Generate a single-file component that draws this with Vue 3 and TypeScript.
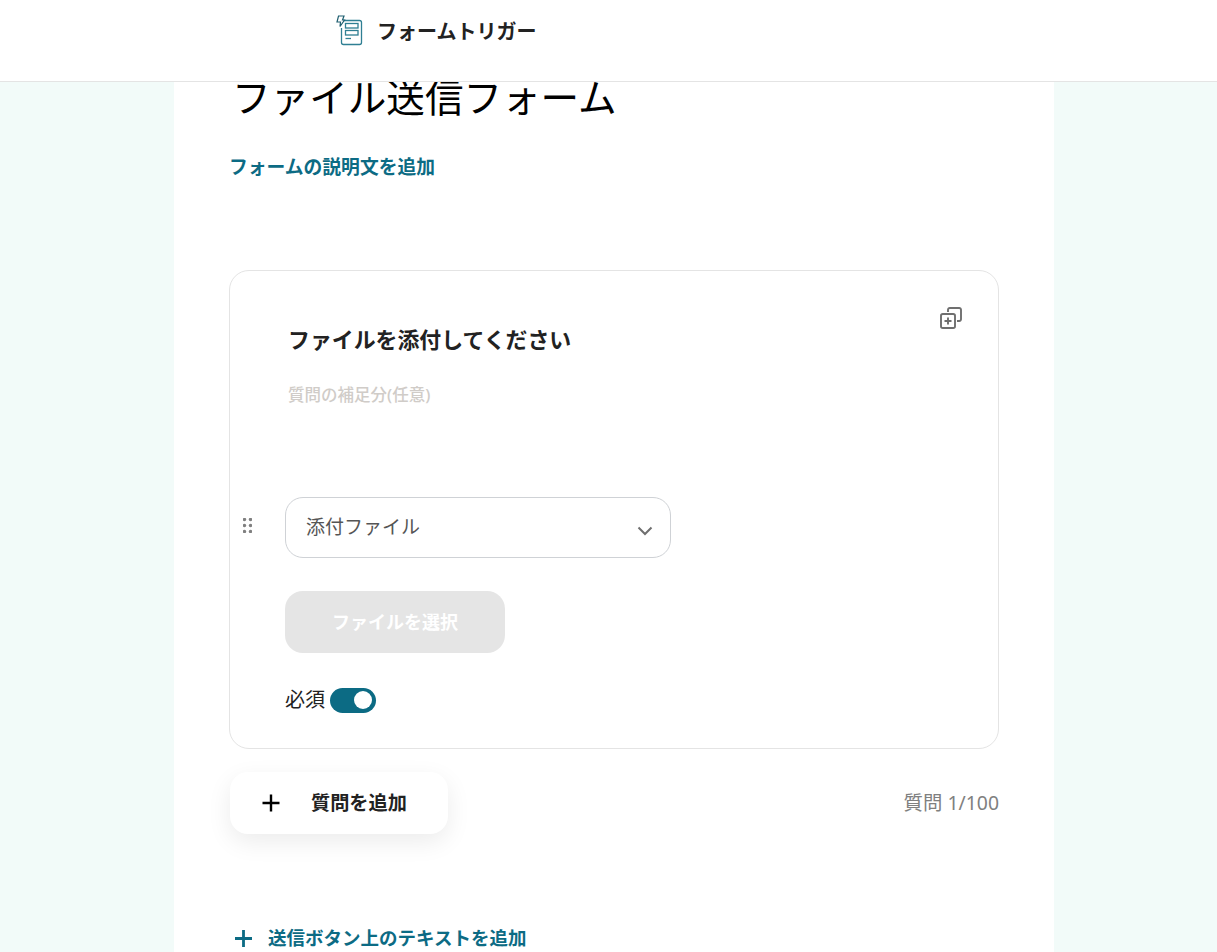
<script setup lang="ts">
import { ref } from 'vue';

const required = ref(true);
const questionCount = ref(1);
const questionMax = 100;
const dragDots = [
  [1.5, 1.5],
  [7.5, 1.5],
  [1.5, 7.5],
  [7.5, 7.5],
  [1.5, 13.5],
  [7.5, 13.5],
];
</script>

<template>
  <div class="page">
    <header class="topbar">
      <div class="brand">
        <svg class="brand-icon" width="27" height="32" viewBox="0 0 27 32" fill="none" stroke="#2f7f93" stroke-width="1.3">
          <path d="M6 5.500h17.500a2 2 0 0 1 2 2v20a2 2 0 0 1-2 2H7.500a2 2 0 0 1-2-2V13" />
          <path d="M2.500 1h5.500L6.500 5h2L4 11.500 4.500 7H1z" stroke="#1f5f70" stroke-width="1.200" fill="#fff" />
          <rect x="9.500" y="8.500" width="12.500" height="4.500" />
          <rect x="9.500" y="15.500" width="12.500" height="4.500" />
          <path d="M9.500 23.500h5.500" />
        </svg>
        <span class="brand-name">フォームトリガー</span>
      </div>
    </header>

    <main class="sheet">
      <h1 class="form-title">ファイル送信フォーム</h1>
      <a class="link desc-link">フォームの説明文を追加</a>

      <section class="card">
        <button class="copy-btn" aria-label="複製">
          <svg width="24" height="24" viewBox="0 0 24 24" fill="none" stroke="#6f6f6f" stroke-width="1.900">
            <path d="M9 6V3.800A1.800 1.800 0 0 1 10.800 2h9.400A1.800 1.800 0 0 1 22 3.800v9.400a1.800 1.800 0 0 1-1.800 1.800H18" />
            <rect x="2" y="8" width="14" height="14" rx="1.800" />
            <path d="M9 11.500v7M5.500 15h7" />
          </svg>
        </button>
        <h2 class="question">ファイルを添付してください</h2>
        <p class="supplement">質問の補足分(任意)</p>

        <div class="field-row">
          <svg class="drag" width="9" height="15" viewBox="0 0 9 15" fill="#808080">
            <circle v-for="(d, i) in dragDots" :key="i" :cx="d[0]" :cy="d[1]" r="1.700" />
          </svg>
          <div class="select">
            <span>添付ファイル</span>
            <svg width="16" height="10" viewBox="0 0 16 10" fill="none" stroke="#6f6f6f" stroke-width="2">
              <path d="M1.500 1.500 8 8l6.500-6.500" />
            </svg>
          </div>
        </div>

        <button class="file-btn" disabled>ファイルを選択</button>

        <label class="required">
          <span>必須</span>
          <span class="switch" :class="{ on: required }" @click="required = !required"><i /></span>
        </label>
      </section>

      <div class="below-card">
        <button class="add-question">
          <svg width="18" height="18" viewBox="0 0 18 18" stroke="#000" stroke-width="2.400">
            <path d="M9 0.500v17M0.500 9h17" />
          </svg>
          <span>質問を追加</span>
        </button>
        <span class="counter">質問 {{ questionCount }}/{{ questionMax }}</span>
      </div>

      <a class="link submit-link">
        <svg width="19" height="19" viewBox="0 0 19 19" stroke="#0c6b84" stroke-width="2.800">
          <path d="M9.500 1v17M1 9.500h17" />
        </svg>
        <span>送信ボタン上のテキストを追加</span>
      </a>
    </main>
  </div>
</template>

<style scoped>
.page {
  height: 952px;
  overflow: hidden;
  background: #f2fbf9;
  font-family: 'Noto Sans', 'Noto Sans CJK JP', sans-serif;
  color: #222;
}
.topbar {
  position: relative;
  z-index: 2;
  height: 81px;
  background: #fff;
  border-bottom: 1px solid #e4e4e4;
}
.brand {
  display: flex;
  align-items: center;
  gap: 14px;
  padding: 15px 0 0 336px;
}
.brand-name {
  margin-top: 1px;
  font-size: 20px;
  line-height: 30px;
  font-weight: 700;
  color: #222;
}
.sheet {
  width: 770px;
  height: 900px;
  margin: -30px 0 0 174px;
  padding: 0 55px;
  background: #fff;
}
.form-title {
  margin: 0;
  padding: 16px 0 0 3px;
  font-size: 38.6px;
  line-height: 58px;
  font-weight: 400;
  color: #000;
}
.link {
  color: #0c6b84;
  font-weight: 700;
  font-size: 18.8px;
}
.desc-link {
  display: block;
  margin-top: 28px;
  line-height: 26px;
}
.card {
  position: relative;
  box-sizing: border-box;
  height: 479px;
  margin-top: 90px;
  padding: 54px 55px 0;
  border: 1px solid #e4e4e4;
  border-radius: 20px;
}
.copy-btn {
  position: absolute;
  top: 35px;
  right: 35px;
  padding: 0;
  border: 0;
  background: none;
  line-height: 0;
}
.question {
  margin: 0 0 0 3px;
  font-size: 21.9px;
  line-height: 30px;
  font-weight: 700;
  color: #222;
}
.supplement {
  margin: 28px 0 0 3px;
  font-size: 16.500px;
  line-height: 24px;
  font-weight: 500;
  color: #d0ccc8;
}
.field-row {
  position: relative;
  margin-top: 90px;
}
.drag {
  position: absolute;
  left: -42px;
  top: 21px;
}
.select {
  box-sizing: border-box;
  display: flex;
  align-items: center;
  justify-content: space-between;
  width: 386px;
  height: 61px;
  padding: 0 17px 0 20px;
  border: 1px solid #cfd2d6;
  border-radius: 18px;
  font-size: 19px;
  color: #555;
}
.select span {
  margin-top: -4px;
}
.select svg {
  margin-top: 7px;
}
.file-btn {
  display: block;
  width: 220px;
  height: 62px;
  margin-top: 33px;
  padding: 0 0 2px;
  border: 0;
  border-radius: 18px;
  background: #e5e5e5;
  color: #fff;
  font-family: inherit;
  font-size: 18px;
  font-weight: 700;
}
.required {
  display: flex;
  align-items: center;
  gap: 5px;
  margin-top: 34px;
  font-size: 20px;
  line-height: 26px;
  color: #222;
}
.switch {
  display: flex;
  align-items: center;
  justify-content: flex-start;
  box-sizing: border-box;
  width: 46px;
  height: 25px;
  padding: 0 4px;
  border-radius: 13px;
  background: #bbb;
}
.switch.on {
  justify-content: flex-end;
  background: #0c6b84;
}
.switch i {
  width: 18px;
  height: 18px;
  border-radius: 50%;
  background: #fff;
}
.below-card {
  display: flex;
  align-items: center;
  justify-content: space-between;
  margin-top: 23px;
}
.add-question {
  display: flex;
  align-items: center;
  gap: 31px;
  width: 218px;
  height: 62px;
  margin-left: 1px;
  padding: 0 0 0 32px;
  border: 0;
  border-radius: 18px;
  background: #fff;
  box-shadow: 0 8px 24px rgba(0, 0, 0, 0.08);
  font-family: inherit;
  font-size: 19.200px;
  font-weight: 700;
  color: #222;
}
.add-question span {
  margin-top: -2px;
}
.counter {
  margin-top: -4px;
  font-size: 19.400px;
  color: #808080;
}
.submit-link {
  display: flex;
  align-items: center;
  gap: 15px;
  margin-top: 90px;
  padding-left: 5px;
  font-size: 18.500px;
  line-height: 28px;
}
</style>

<style>
html,
body {
  margin: 0;
  background: #f2fbf9;
}
</style>
